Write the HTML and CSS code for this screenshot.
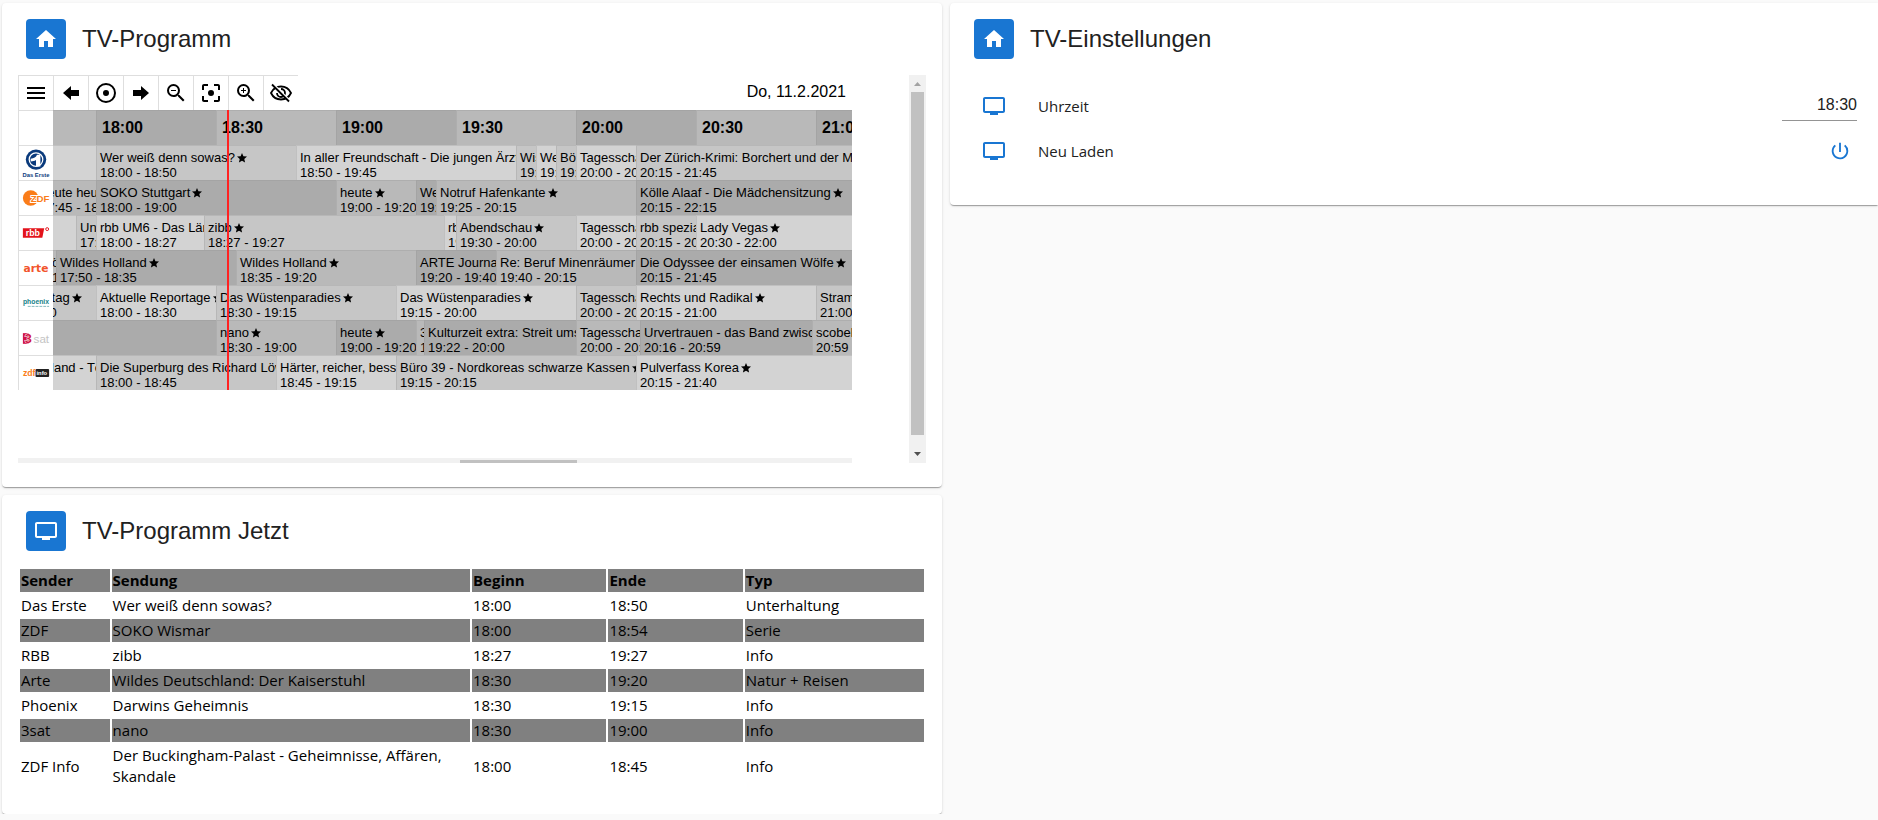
FILE: index.html
```html
<!DOCTYPE html>
<html lang="de">
<head>
<meta charset="utf-8">
<title>TV-Programm</title>
<link rel="stylesheet" href="styles.css">
</head>
<body>
<svg class="defs" aria-hidden="true">
  <symbol id="home" viewBox="0 0 24 24"><path d="M10 20v-6h4v6h5v-8h3L12 3 2 12h3v8z"/></symbol>
  <symbol id="tv" viewBox="0 0 24 24"><path d="M21 3H3c-1.100 0-2 .9-2 2v12c0 1.100.9 2 2 2h5v2h8v-2h5c1.100 0 2-.9 2-2V5c0-1.100-.9-2-2-2zm0 14H3V5h18v12z"/></symbol>
  <symbol id="star" viewBox="0 0 24 24"><path d="M12 17.300 18.200 21l-1.640-7.030L22 9.240l-7.190-.61L12 2 9.190 8.630 2 9.240l5.460 4.730L5.820 21z"/></symbol>
</svg>
<main class="dashboard">
  <div class="column">
    <section class="card">
      <header class="card-head"><span class="badge"><svg class="icon"><use href="#home"/></svg></span><h2>TV-Programm</h2></header>
      <div class="guide-frame">
        <div class="guide">
          <div class="toolbar">
            <button type="button" aria-label="Menü"><svg class="icon" viewBox="0 0 24 24"><path d="M3 6h18v2H3zM3 11h18v2H3zM3 16h18v2H3z"/></svg></button>
            <button type="button" aria-label="Zurück"><svg class="icon" viewBox="0 0 24 24"><path d="M4 12l8-7v4h8v6h-8v4z"/></svg></button>
            <button type="button" aria-label="Jetzt"><svg class="icon" viewBox="0 0 24 24"><path d="M12 2a10 10 0 1 0 0 20 10 10 0 0 0 0-20zm0 2a8 8 0 1 1 0 16 8 8 0 0 1 0-16zm0 5a3 3 0 1 0 0 6 3 3 0 0 0 0-6z"/></svg></button>
            <button type="button" aria-label="Vor"><svg class="icon" viewBox="0 0 24 24"><path d="M20 12l-8-7v4H4v6h8v4z"/></svg></button>
            <button type="button" aria-label="Verkleinern"><svg class="icon" viewBox="0 0 24 24"><path d="M15.500 14h-.79l-.28-.27A6.470 6.470 0 0 0 16 9.500 6.500 6.500 0 1 0 9.500 16c1.610 0 3.090-.59 4.230-1.570l.27.28v.79l5 5L20.500 19zm-6 0a4.500 4.500 0 1 1 0-9 4.500 4.500 0 0 1 0 9zM7 9h5v1H7z"/></svg></button>
            <button type="button" aria-label="Zoom zurücksetzen"><svg class="icon" viewBox="0 0 24 24"><path d="M5 15H3v4c0 1.100.9 2 2 2h4v-2H5zM5 5h4V3H5c-1.100 0-2 .9-2 2v4h2zM19 3h-4v2h4v4h2V5c0-1.100-.9-2-2-2zM19 19h-4v2h4c1.100 0 2-.9 2-2v-4h-2zM12 9a3 3 0 1 0 0 6 3 3 0 0 0 0-6z"/></svg></button>
            <button type="button" aria-label="Vergrößern"><svg class="icon" viewBox="0 0 24 24"><path d="M15.500 14h-.79l-.28-.27A6.470 6.470 0 0 0 16 9.500 6.500 6.500 0 1 0 9.500 16c1.610 0 3.090-.59 4.230-1.570l.27.28v.79l5 5L20.500 19zm-6 0a4.500 4.500 0 1 1 0-9 4.500 4.500 0 0 1 0 9zM12 10h-2v2H9v-2H7V9h2V7h1v2h2z"/></svg></button>
            <button type="button" aria-label="Ausblenden"><svg class="icon" viewBox="0 0 24 24"><g fill="none" stroke="#000" stroke-width="1.800"><path d="M2 12C4 7.800 7.700 5.500 12 5.500s8 2.300 10 6.500c-2 4.200-5.700 6.500-10 6.500S4 16.200 2 12z"/><path d="M12 8a4 4 0 1 1-4 4"/></g><path d="M5 2.500 21.500 19l-1.500 1.500L3.500 4z" fill="#fff"/><path d="M3 3.500 20 20.500" stroke="#000" stroke-width="1.800"/></svg></button>
            <span class="date">Do, 11.2.2021</span>
          </div>
          <div class="schedule">
            <div class="channels">
              <div class="channel"></div>
              <div class="channel"><svg viewBox="0 0 35 34" role="img" aria-label="Das Erste"><circle cx="17.500" cy="13.500" r="10.500" fill="#0a3a7c"/><circle cx="17.500" cy="13.500" r="7" fill="none" stroke="#fff" stroke-width="1.300"/><path d="M12 12.500c3.500 0 5.500-1.500 6.500-4H22v12h-4.500V14c-1.500 1-3.500 1.500-5.500 1.500z" fill="#fff"/><text x="17.500" y="31" class="logo-erste">Das Erste</text></svg></div>
              <div class="channel"><svg viewBox="0 0 35 34" role="img" aria-label="ZDF"><circle cx="12" cy="17" r="8" fill="#fa7d19"/><text x="12" y="21" class="logo-zdf">ZDF</text></svg></div>
              <div class="channel"><svg viewBox="0 0 35 34" role="img" aria-label="rbb"><path d="M4 12h22l-2 10H4z" fill="#e3131b"/><text x="7" y="20" class="logo-rbb">rbb</text><circle cx="29" cy="13" r="1.500" fill="none" stroke="#e3131b"/></svg></div>
              <div class="channel"><svg viewBox="0 0 35 34" role="img" aria-label="arte"><text x="17.500" y="21" class="logo-arte">arte</text></svg></div>
              <div class="channel"><svg viewBox="0 0 35 34" role="img" aria-label="phoenix"><text x="17.500" y="18" class="logo-phoenix">phoenix</text><path d="M9 20.500h22" stroke="#82b9bd" stroke-dasharray="3 1"/></svg></div>
              <div class="channel"><svg viewBox="0 0 35 34" role="img" aria-label="3sat"><path d="M4 12h6v11H4z" fill="#d01446"/><text x="6" y="22" class="logo-three">3</text><text x="15" y="22" class="logo-sat">sat</text></svg></div>
              <div class="channel"><svg viewBox="0 0 35 34" role="img" aria-label="ZDFinfo"><rect x="17" y="13" width="14" height="8" rx="1" fill="#222"/><text x="4" y="20" class="logo-zi">zdf</text><text x="18" y="19" class="logo-info">info</text></svg></div>
            </div>
            <div class="tracks" id="tracks"><div class="now"></div></div>
          </div>
          <div class="hscroll"><div class="hthumb"></div></div>
        </div>
        <div class="vscroll"><svg viewBox="0 0 17 17"><path d="M5 11h7L8.500 7z" fill="#a3a3a3"/></svg><div class="vthumb"></div><svg viewBox="0 0 17 17"><path d="M5 6h7l-3.500 4z" fill="#505050"/></svg></div>
      </div>
    </section>
    <section class="card">
      <header class="card-head"><span class="badge"><svg class="icon"><use href="#tv"/></svg></span><h2>TV-Programm Jetzt</h2></header>
      <table class="now-table">
        <colgroup><col class="w10"><col class="w40"><col class="w15"><col class="w15"><col class="w20"></colgroup>
        <tr><th>Sender</th><th>Sendung</th><th>Beginn</th><th>Ende</th><th>Typ</th></tr>
        <tr><td>Das Erste</td><td>Wer weiß denn sowas?</td><td>18:00</td><td>18:50</td><td>Unterhaltung</td></tr>
        <tr><td>ZDF</td><td>SOKO Wismar</td><td>18:00</td><td>18:54</td><td>Serie</td></tr>
        <tr><td>RBB</td><td>zibb</td><td>18:27</td><td>19:27</td><td>Info</td></tr>
        <tr><td>Arte</td><td>Wildes Deutschland: Der Kaiserstuhl</td><td>18:30</td><td>19:20</td><td>Natur + Reisen</td></tr>
        <tr><td>Phoenix</td><td>Darwins Geheimnis</td><td>18:30</td><td>19:15</td><td>Info</td></tr>
        <tr><td>3sat</td><td>nano</td><td>18:30</td><td>19:00</td><td>Info</td></tr>
        <tr><td>ZDF Info</td><td>Der Buckingham-Palast - Geheimnisse, Affären, Skandale</td><td>18:00</td><td>18:45</td><td>Info</td></tr>
      </table>
    </section>
  </div>
  <div class="column">
    <section class="card card-edge">
      <header class="card-head"><span class="badge"><svg class="icon"><use href="#home"/></svg></span><h2>TV-Einstellungen</h2></header>
      <div class="settings">
        <div class="setting"><svg class="icon"><use href="#tv"/></svg><label for="time">Uhrzeit</label><input id="time" type="text" value="18:30"></div>
        <div class="setting"><svg class="icon"><use href="#tv"/></svg><label for="reload">Neu Laden</label><button id="reload" type="button" class="power"><svg viewBox="0 0 24 24"><path d="M13 3h-2v10h2zm4.830 2.170-1.420 1.420A6.920 6.920 0 0 1 19 12a7 7 0 1 1-11.420-5.420L6.170 5.170A9 9 0 1 0 21 12a8.940 8.940 0 0 0-3.170-6.830z"/></svg></button></div>
      </div>
    </section>
  </div>
</main>
<script src="guide.js"></script>
</body>
</html>
```
FILE: guide.js
```js
// Each row: list of [start, end, title, starred, shade]; shade a and b alternate.
const rows = [
  [['17:30','18:00','',0,'a'],['18:00','18:50','Wer weiß denn sowas?',1,'b'],['18:50','19:45','In aller Freundschaft - Die jungen Ärzte',1,'a'],['19:45','19:50','Wissen vor acht',1,'b'],['19:50','19:55','Wetter vor acht',1,'a'],['19:55','20:00','Börse vor acht',1,'b'],['20:00','20:15','Tagesschau',1,'a'],['20:15','21:45','Der Zürich-Krimi: Borchert und der Mord im Taxi',1,'b']],
  [['17:45','18:00','heute heute',1,'a'],['18:00','19:00','SOKO Stuttgart',1,'b'],['19:00','19:20','heute',1,'a'],['19:20','19:25','Wetter',1,'b'],['19:25','20:15','Notruf Hafenkante',1,'a'],['20:15','22:15','Kölle Alaaf - Die Mädchensitzung',1,'b']],
  [['17:35','17:55','',0,'a'],['17:55','18:00','Unser Sandmann',1,'b'],['18:00','18:27','rbb UM6 - Das Ländermagazin',1,'a'],['18:27','19:27','zibb',1,'b'],['19:27','19:30','rbb wetter',1,'a'],['19:30','20:00','Abendschau',1,'b'],['20:00','20:15','Tagesschau',1,'a'],['20:15','20:30','rbb spezial',1,'b'],['20:30','22:00','Lady Vegas',1,'a']],
  [['17:48','17:50','ö',0,'a'],['17:50','18:35','Wildes Holland',1,'b'],['18:35','19:20','Wildes Holland',1,'a'],['19:20','19:40','ARTE Journal',1,'b'],['19:40','20:15','Re: Beruf Minenräumer',1,'a'],['20:15','21:45','Die Odyssee der einsamen Wölfe',1,'b']],
  [['17:30','18:00','phoenix der tag',1,'b'],['18:00','18:30','Aktuelle Reportage',1,'a'],['18:30','19:15','Das Wüstenparadies',1,'b'],['19:15','20:00','Das Wüstenparadies',1,'a'],['20:00','20:15','Tagesschau',1,'b'],['20:15','21:00','Rechts und Radikal',1,'a'],['21:00','21:45','Stramm rechts',1,'b']],
  [['17:30','18:30','',0,'b'],['18:30','19:00','nano',1,'a'],['19:00','19:20','heute',1,'b'],['19:20','19:22','3sat-Wetter',1,'a'],['19:22','20:00','Kulturzeit extra: Streit ums Erbe',1,'b'],['20:00','20:16','Tagesschau',1,'a'],['20:16','20:59','Urvertrauen - das Band zwischen uns',1,'b'],['20:59','21:45','scobel',1,'a']],
  [['17:15','18:00','Die Wartburg, Deutschland - Tödlich',1,'a'],['18:00','18:45','Die Superburg des Richard Löwenherz',1,'b'],['18:45','19:15','Härter, reicher, besser',1,'a'],['19:15','20:15','Büro 39 - Nordkoreas schwarze Kassen',1,'b'],['20:15','21:40','Pulverfass Korea',1,'a']]
];
const PX_PER_MIN = 4;
const VIEW_START = 17 * 60 + 49;
const minutes = t => { const [h, m] = t.split(':').map(Number); return h * 60 + m; };
const tracks = document.getElementById('tracks');

function addTrack(cls, start) {
  const track = document.createElement('div');
  track.className = 'track ' + cls;
  const strip = document.createElement('div');
  strip.className = 'strip';
  // the one-pixel cell border sits before the tick
  strip.style.marginLeft = (minutes(start) - VIEW_START) * PX_PER_MIN - 1 + 'px';
  track.append(strip);
  tracks.append(track);
  return strip;
}

const head = addTrack('track-head', '17:30');
['17:30', '18:00', '18:30', '19:00', '19:30', '20:00', '20:30', '21:00', '21:30'].forEach((t, i) => {
  const cell = document.createElement('div');
  cell.className = 'hour ' + (i % 2 ? 'b' : 'a');
  cell.style.width = 30 * PX_PER_MIN + 'px';
  cell.textContent = t;
  head.append(cell);
});

const star = '<svg class="star"><use href="#star"/></svg>';
rows.forEach((row, i) => {
  const strip = addTrack(i % 2 ? 'dark' : 'light', row[0][0]);
  for (const [from, to, title, starred, shade] of row) {
    const show = document.createElement('div');
    show.className = 'show ' + shade;
    show.style.width = (minutes(to) - minutes(from)) * PX_PER_MIN + 'px';
    if (title) show.innerHTML = `<div>${title}${starred ? star : ''}</div><div>${from} - ${to}</div>`;
    strip.append(show);
  }
});
```
FILE: styles.css
```css
* { box-sizing: border-box; }
body { margin: 0; background: #fafafa; color: #212121; font-family: "Open Sans", "Noto Sans", sans-serif; font-size: 15px; }
button { border: 0; background: none; padding: 0; }
.defs { display: none; }
.icon { width: 24px; height: 24px; display: block; }
.dashboard { display: grid; grid-template-columns: 940fr 928fr; gap: 8px; padding: 3px 0 0 2px; align-items: start; }
.column { display: grid; gap: 8px; min-width: 0; }
.card { background: #fff; border-radius: 4px; padding: 16px 16px 24px; min-width: 0; box-shadow: 0 2px 1px -1px rgba(0,0,0,.2), 0 1px 1px 0 rgba(0,0,0,.14), 0 1px 3px 0 rgba(0,0,0,.12); }
.card-edge { border-radius: 4px 0 0 4px; padding-right: 21px; }
.card-head { display: flex; align-items: center; gap: 16px; padding-left: 8px; margin-bottom: 16px; }
.badge { width: 40px; height: 40px; border-radius: 4px; background: #1976d2; display: flex; align-items: center; justify-content: center; }
.badge .icon { fill: #fff; }
h2 { margin: 0; font: 400 24px/32px "Liberation Sans", Arial, sans-serif; }

.guide-frame { display: flex; font-family: "Liberation Sans", Arial, sans-serif; color: #000; }
.guide { flex: 1; min-width: 0; margin-right: 57px; display: flex; flex-direction: column; }
.toolbar { display: flex; height: 35px; }
.toolbar button { width: 35px; height: 35px; border: 1px solid #dedede; border-width: 1px 0 0 1px; display: flex; align-items: center; justify-content: center; }
.date { margin: 8px 6px 0 auto; font-size: 16px; line-height: 18px; }
.schedule { display: flex; }
.channels { width: 35px; flex: none; }
.channel { height: 35px; border: 1px solid #dedede; border-width: 1px 0 0 1px; }
.channel svg { display: block; width: 34px; height: 34px; }
.tracks { flex: 1; min-width: 0; position: relative; overflow: hidden; }
.track { overflow: hidden; height: 35px; }
.strip { display: flex; height: 35px; }
.hour, .show { flex: none; overflow: hidden; white-space: nowrap; border: 1px solid rgba(150,150,150,.3); border-width: 1px 0 0 1px; }
.hour { font-size: 16px; font-weight: 700; line-height: 34px; padding-left: 5px; }
.show { font-size: 13px; line-height: 15px; padding: 4px 0 0 3px; }
.show div { height: 15px; }
.track-head .a, .dark .a { background: #b9b9b9; }
.track-head .b, .dark .b { background: #ababab; }
.light .a { background: #d3d3d3; }
.light .b { background: #c6c6c6; }
.star { width: 12px; height: 12px; margin-left: 1px; vertical-align: -2px; }
.now { position: absolute; top: 0; bottom: 0; left: 174px; width: 2px; background: #f22; }
.hscroll { margin-top: 68px; height: 5px; background: #f1f1f1; padding: 2px 0 0; }
.hthumb { height: 3px; width: 14%; margin-left: 53%; background: #c1c1c1; }
.vscroll { width: 17px; background: #f1f1f1; display: flex; flex-direction: column; }
.vscroll svg { width: 17px; height: 17px; display: block; }
.vthumb { flex: 1; margin: 0 2px 11px; background: #c1c1c1; }

.now-table { width: 100%; table-layout: fixed; border-spacing: 2px; color: #000; line-height: 21px; }
.now-table th, .now-table td { padding: 1px; text-align: left; }
.now-table th, .now-table tr:nth-child(odd) td { background: #808080; }
.w10 { width: 10%; } .w40 { width: 40%; } .w15 { width: 15%; } .w20 { width: 20%; }

.settings { padding: 8px 0 8px 16px; }
.setting { display: flex; align-items: center; height: 45px; }
.setting .icon { fill: #1976d2; margin-right: 32px; }
.setting label { flex: 1; }
.setting input { width: 75px; height: 30px; border: 0; border-bottom: 1px solid #949494; background: none; padding: 0; text-align: right; color: #212121; font: 16px "Liberation Sans", Arial, sans-serif; }
.power { width: 34px; height: 24px; display: flex; justify-content: center; align-items: center; }
.power svg { width: 22px; height: 22px; fill: #1976d2; }

.logo-erste { font: 700 6px "Liberation Sans", sans-serif; fill: #0a3a7c; text-anchor: middle; }
.logo-zdf { font: 700 10px "Liberation Sans", sans-serif; fill: #fa7d19; stroke: #fff; stroke-width: 2px; paint-order: stroke; }
.logo-rbb { font: 700 9px "Liberation Sans", sans-serif; fill: #fff; }
.logo-arte { font: 700 11px "DejaVu Sans", sans-serif; fill: #f2552c; text-anchor: middle; }
.logo-phoenix { font: 700 7px "Liberation Sans", sans-serif; fill: #168289; text-anchor: middle; }
.logo-three { font: 700 13px "Liberation Sans", sans-serif; fill: #d01446; stroke: #fff; stroke-width: 1px; paint-order: stroke; }
.logo-sat { font: 12px "Liberation Sans", sans-serif; fill: #c4c4c4; }
.logo-zi { font: 700 9px "Liberation Sans", sans-serif; fill: #fa7d19; }
.logo-info { font: 700 6px "Liberation Sans", sans-serif; fill: #fff; }
```
